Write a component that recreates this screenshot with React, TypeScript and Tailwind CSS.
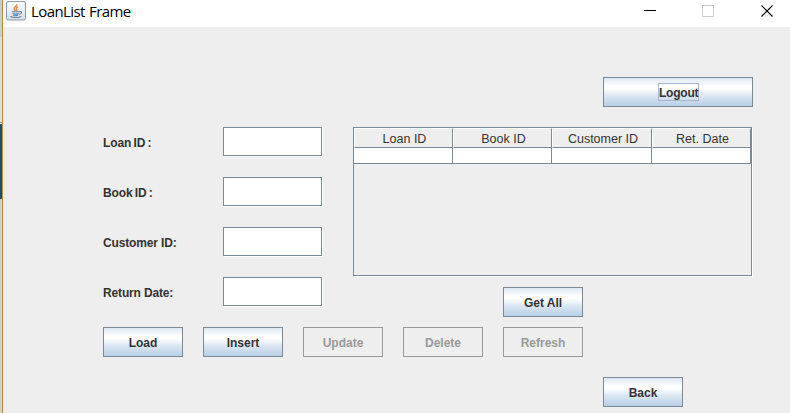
import type { ReactNode } from "react";

function Button({ children, wide, disabled, focused }: { children: ReactNode; wide?: boolean; disabled?: boolean; focused?: boolean }) {
  const look = disabled
    ? "border-[#999999] text-[#999999]"
    : "border-[#7a8a99] text-[#333333] bg-[linear-gradient(180deg,#dde8f3_0%,#ffffff_30%,#ffffff_38%,#dce7f2_62%,#b8cfe5_100%)]";
  return (
    <button disabled={disabled} className={`flex h-[30px] items-center justify-center border text-[12px] leading-[14px] font-bold ${wide ? "w-[150px]" : "w-[80px]"} ${look}`}>
      <span className={focused ? "relative left-[0.5px] h-[18px] w-[41px] border border-[#a3b8cc] pt-px leading-[16px] tracking-[-0.22px]" : "relative top-px"}>{children}</span>
    </button>
  );
}

function Field({ label, tight }: { label: string; tight?: boolean }) {
  return (
    <label className="flex h-[30px] items-start">
      <span className={`w-[120px] pt-[9px] text-[12px] leading-[14px] font-bold text-[#333333] ${tight ? "tracking-[-0.1px] [word-spacing:-1px]" : "tracking-[-0.15px]"}`}>{label}</span>
      <input className="h-[29px] w-[99px] rounded-none border border-[#7a8a99] bg-white shadow-[1px_1px_0_#ffffff] outline-none" />
    </label>
  );
}

function JavaIcon() {
  return (
    <svg width="20" height="20" viewBox="0 0 20 20" fill="none">
      <defs>
        <linearGradient id="tile" x1="0" y1="0" x2="0" y2="1">
          <stop offset="0" stopColor="#ffffff" />
          <stop offset="1" stopColor="#d5dde3" />
        </linearGradient>
      </defs>
      <rect x="0.5" y="0.5" width="19" height="18.5" rx="1.5" fill="url(#tile)" stroke="#8d9ba8" />
      <path d="M10.8 3.2c.8 2-3.2 2.800-2.600 4.600.2.900 1 1.300 1.300 2.200M12 5.800c-1.900.9-2 1.700-1.300 2.600.4.600.1 1.200-.4 1.600" stroke="#e58a45" strokeWidth="1.400" />
      <path d="M5.800 10.700h7.700M6.500 12.600c1.700.6 4.500.5 6.200 0M7.200 14.300c1.500.5 3.300.5 4.800 0M4.300 15.500c2.500 1.400 8.500 1.400 11 0M13.500 10.500c2.800-.4 2.600 2-.2 2.700" stroke="#5d82a3" strokeWidth="1.100" />
    </svg>
  );
}

const columns = [
  { name: "Loan ID", width: "w-[99px]" },
  { name: "Book ID", width: "w-[99px]" },
  { name: "Customer ID", width: "w-[100px]" },
  { name: "Ret. Date", width: "w-[99px]" },
];

export default function App() {
  return (
    <div className="flex h-[413px] w-[790px] overflow-hidden bg-[#eeeeee] font-['Liberation_Sans',Arial,sans-serif]">
      <div className="flex w-[2px] flex-col bg-[#d0d0d0]">
        <div className="h-[37px] bg-[#c8ccd4]" />
        <div className="h-[85px] bg-[#dddddd]" />
        <div className="h-px bg-[#8f8f8f]" />
        <div className="h-px bg-[#eeeeee]" />
        <div className="h-[75px] bg-[#1f4e79]" />
      </div>
      <div className="w-px bg-[#cc8a2a]" />
      <div className="flex flex-1 flex-col">
        <header className="flex h-[27px] items-start bg-white pl-[3px]">
          <div className="pt-px"><JavaIcon /></div>
          <h1 className="flex-1 pl-[5px] pt-px font-['Open_Sans',sans-serif] text-[15px] leading-[20px] tracking-[-0.6px] [word-spacing:1px] text-black">LoanList Frame</h1>
          <svg width="146" height="27" fill="none" shapeRendering="crispEdges">
            <path d="M0 10.500h12" stroke="#000000" />
            <rect x="58.500" y="5.500" width="11" height="11" stroke="#cccccc" />
            <path d="M117.500 5.500l11 11M128.500 5.500l-11 11" stroke="#000000" strokeWidth="1.200" shapeRendering="auto" />
          </svg>
        </header>
        <main className="flex flex-col pl-[100px] pt-[50px]">
          <div className="flex justify-end pr-[37px]"><Button wide focused>Logout</Button></div>
          <div className="mt-5 flex h-[190px]">
            <div className="flex w-[250px] flex-col gap-5">
              <Field label="Loan ID :" tight />
              <Field label="Book ID :" tight />
              <Field label="Customer ID:" />
              <Field label="Return Date:" />
            </div>
            <div className="flex w-[400px] flex-col gap-[11px]">
              <div className="h-[149px] w-[399px] border border-[#7a8a99] shadow-[1px_1px_0_#ffffff]">
                <table className="w-[397px] table-fixed border-separate border-spacing-0">
                  <thead>
                    <tr>
                      {columns.map((c) => (
                        <th key={c.name} className={`h-[20px] border-t border-r border-b border-l border-t-white border-r-[#7a8a99] border-b-[#7a8a99] border-l-white p-0 text-center text-[12px] leading-[16px] font-normal text-[#333333] ${c.width}`}>
                          <span className="relative top-px left-px text-[12.5px]">{c.name}</span>
                        </th>
                      ))}
                    </tr>
                  </thead>
                  <tbody>
                    <tr>
                      {columns.map((c) => (
                        <td key={c.name} className="h-[16px] border-r border-b border-[#7a8a99] bg-white p-0" />
                      ))}
                    </tr>
                  </tbody>
                </table>
              </div>
              <div className="pl-[150px]"><Button>Get All</Button></div>
            </div>
          </div>
          <div className="mt-[10px] flex gap-5">
            <Button>Load</Button>
            <Button>Insert</Button>
            <Button disabled>Update</Button>
            <Button disabled>Delete</Button>
            <Button disabled>Refresh</Button>
          </div>
          <div className="mt-5 pl-[500px]"><Button>Back</Button></div>
        </main>
      </div>
    </div>
  );
}
